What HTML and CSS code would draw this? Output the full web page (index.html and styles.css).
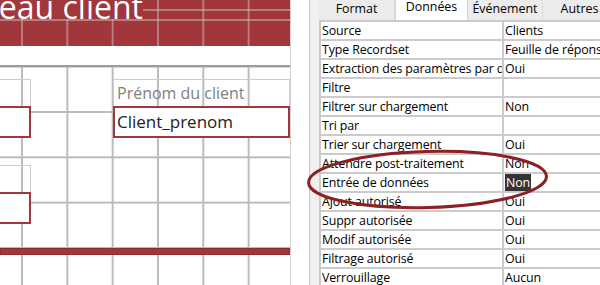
FILE: index.html
```
<!DOCTYPE html>
<html lang="fr">
<head>
	<meta charset="utf-8">
	<title>Tableau client - Mode création</title>
	<link rel="stylesheet" href="styles.css">
</head>
<body>
<div class="screen">
	<!-- Form designer -->
	<section class="designer">
		<header class="form-header">
			<div class="title-row">
				<div class="form-title"><span>Tableau client</span></div>
			</div>
		</header>
		<div class="header-gap"></div>
		<div class="detail">
			<div class="controls">
				<div class="label-box cut row1"></div>
				<div class="label-box wide row1">Prénom du client</div>
				<div class="text-box cut row2"></div>
				<div class="text-box wide row2">Client_prenom</div>
				<div class="label-box cut row4"></div>
				<div class="text-box cut row5"></div>
			</div>
			<div class="section-bar"></div>
		</div>
	</section>

	<!-- Property sheet -->
	<aside class="property-sheet">
		<nav class="tabs">
			<div class="tab t-format">Format</div>
			<div class="tab t-data active">Données</div>
			<div class="tab t-event">Événement</div>
			<div class="tab t-other">Autres</div>
		</nav>
		<div class="props">
			<div class="name">Source</div><div class="value">Clients</div>
			<div class="name">Type Recordset</div><div class="value">Feuille de réponse dynamique</div>
			<div class="name">Extraction des paramètres par défaut</div><div class="value">Oui</div>
			<div class="name">Filtre</div><div class="value"></div>
			<div class="name">Filtrer sur chargement</div><div class="value">Non</div>
			<div class="name">Tri par</div><div class="value"></div>
			<div class="name">Trier sur chargement</div><div class="value">Oui</div>
			<div class="name">Attendre post-traitement</div><div class="value">Non</div>
			<div class="name">Entrée de données</div><div class="value"><span class="selected">Non</span></div>
			<div class="name">Ajout autorisé</div><div class="value">Oui</div>
			<div class="name">Suppr autorisée</div><div class="value">Oui</div>
			<div class="name">Modif autorisée</div><div class="value">Oui</div>
			<div class="name">Filtrage autorisé</div><div class="value">Oui</div>
			<div class="name">Verrouillage</div><div class="value">Aucun</div>
		</div>
	</aside>

	<!-- hand drawn circle around the property -->
	<svg class="mark" width="260" height="80" viewBox="0 0 260 80">
		<ellipse cx="127.5" cy="39.5" rx="119" ry="28" transform="rotate(-1.5 127.5 39.5)"
			fill="none" stroke="#8d1f25" stroke-width="3"/>
	</svg>
</div>
</body>
</html>
```

FILE: styles.css
```
	body {
		margin: 0;
		font-family: "Open Sans", "Noto Sans", sans-serif;
	}

	.screen {
		position: relative;
		display: flex;
		width: 600px;
		height: 285px;
		overflow: hidden;
		background: #fff;
	}

	/* Form designer */
	.designer {
		flex: none;
		width: 290px;
		display: flex;
		flex-direction: column;
		border-right: 1px solid #d2d2d2;
	}

	.form-header {
		height: 46px;
		background-color: #a1363b;
		background-image:
			linear-gradient(to right, rgba(205,195,195,.5) 2px, transparent 2px),
			linear-gradient(to bottom, rgba(205,195,195,.5) 2px, transparent 2px);
		background-size: 45.33px 100%, 100% 45.33px;
		background-position: 21px 0, 0 9px;
	}

	.title-row {
		height: 19px;
		border-bottom: 2px solid rgba(205,195,195,.5);
	}

	.form-title {
		width: 143px;
		height: 19px;
		display: flex;
		justify-content: flex-end;
		overflow: hidden;
		background: #a1363b;
	}

	.form-title span {
		flex: none;
		white-space: nowrap;
		color: #fff;
		font-size: 32px;
		line-height: 19px;
		margin-top: -3px;
	}

	.header-gap {
		height: 19px;
	}

	.detail {
		flex: 1;
		border-top: 2px solid #9c9c9c;
		background-image:
			linear-gradient(to right, #bcbcbc 2px, transparent 2px),
			linear-gradient(to bottom, #bcbcbc 2px, transparent 2px);
		background-size: 45.33px 100%, 100% 45.33px;
		background-position: 21px 0, 0 44px;
	}

	.controls {
		display: grid;
		grid-template-columns: 31px 82px 177px;
		grid-template-rows: 27px 32px 27px 27px 32px;
		padding-top: 12px;
	}

	.label-box {
		box-sizing: border-box;
		border: 1px solid #cdcdcd;
		border-bottom: none;
		color: #7f7f7f;
		font-size: 16px;
		line-height: 22px;
		padding: 2px 0 0 3px;
		white-space: nowrap;
		overflow: hidden;
	}

	.text-box {
		box-sizing: border-box;
		border: 2px solid #a1363b;
		background: #fff;
		color: #222;
		font-size: 17px;
		line-height: 28px;
		padding: 0 2px;
		white-space: nowrap;
		overflow: hidden;
	}

	.cut {
		grid-column: 1;
		border-left: none;
	}

	.wide {
		grid-column: 3;
	}

	.row1 { grid-row: 1; }
	.row2 { grid-row: 2; }
	.row4 { grid-row: 4; }
	.row5 { grid-row: 5; }

	.section-bar {
		margin-top: 24px;
		height: 7px;
		box-sizing: border-box;
		background: #a1363b;
		border: 1px solid #8e2b30;
	}

	/* Property sheet */
	.property-sheet {
		flex: 1;
		min-width: 0;
		margin-left: 18px;
		padding-left: 9px;
		border-left: 1px solid #c4c4c4;
		background: #f0f0f0;
		font-size: 12.4px;
		color: #000;
	}

	.tabs {
		display: flex;
		height: 20px;
	}

	.tab {
		flex: none;
		box-sizing: border-box;
		text-align: center;
		line-height: 16px;
		padding-top: 1px;
		background: #ececec;
		border-right: 1px solid #dcdcdc;
		white-space: nowrap;
	}

	.tab.active {
		background: #fff;
		line-height: 12px;
		border-left: 1px solid #d4d4d4;
		border-right: 1px solid #d4d4d4;
	}

	.t-format { width: 76px; }
	.t-data { width: 73px; }
	.t-event { width: 75px; }
	.t-other { width: 74px; }

	.props {
		display: grid;
		grid-template-columns: 181px 120px;
		grid-auto-rows: 17px;
		gap: 2px;
		padding: 2px 0 0 2px;
		background: #cbcbcb;
		width: max-content;
	}

	.name, .value {
		background: #fff;
		line-height: 17px;
		white-space: nowrap;
		overflow: hidden;
		letter-spacing: -0.12px;
	}

	.name {
		padding-left: 1px;
	}

	.value {
		padding-left: 1px;
	}

	.selected {
		background: #333;
		color: #fff;
		padding: 0 1px;
	}

	.mark {
		position: absolute;
		left: 300px;
		top: 140px;
	}
```
